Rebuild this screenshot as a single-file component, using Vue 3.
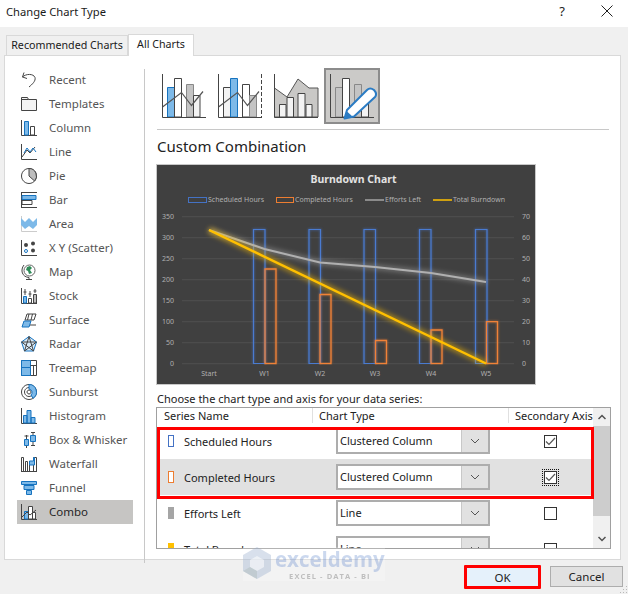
<script setup>
const D = '#444444', B = '#1673bf', L = '#7db9e8', G = '#bdbdbd', W = '#ffffff', P = '#f3f3f3'
const AX = ['M.5 0v15.5H16', 'none', D]
const sideItems = [
  { name: 'Recent', shapes: [['M3 .5 1.5 5 6 6.5M1.5 5C5 1.5 12.5 1.5 14 5.5 15 9 11 12.5 8 15', 'none', D]] },
  { name: 'Templates', shapes: [['M.5 14.5V1.5h6l1 2h8v11z', P, D], ['M.5 3.5h7', 'none', D]] },
  { name: 'Column', shapes: [AX, ['M3.5 15V1.5h4V15z', L, B], ['M9.5 15V6.5h4V15z', W, D]] },
  { name: 'Line', shapes: [AX, ['M1 13 6 6l3 3 5-6', 'none', D], ['M3 9l3-5 3 4 3-4 3 4', 'none', B]] },
  { name: 'Pie', shapes: [['M8 .5a7.5 7.5 0 1 0 .01 0z', W, D], ['M8 8V.5a7.5 7.5 0 0 1 5.6 12.5z', G, D]] },
  { name: 'Bar', shapes: [['M0 .5h16M0 15.5h16M.5 0v16', 'none', D], ['M1 3.5h14v4H1z', L, B], ['M1 8.5h10v4H1z', W, D]] },
  { name: 'Area', shapes: [['M.5 0v15.5H16', 'none', '#cccccc'], ['M0 2l4 4 4-4 4 4 4-4v7l-4 4-4-3-4 3-4-4z', L, 'none']] },
  { name: 'X Y (Scatter)', shapes: [AX, ['M3 5a2 2 0 1 0 4 0 2 2 0 1 0-4 0zM10 3.5a2 2 0 1 0 4 0 2 2 0 1 0-4 0zM10 10.5a2 2 0 1 0 4 0 2 2 0 1 0-4 0z', D, 'none'], ['M3.5 11a1.5 1.5 0 1 0 3 0 1.5 1.5 0 1 0-3 0z', W, B]] },
  { name: 'Map', shapes: [['M3 6.5a5.5 5.5 0 1 0 11 0 5.5 5.5 0 1 0-11 0z', W, '#666666'], ['M6 3l3-1 2 2-2 2 2 3-3 1-1-3-2-1z', '#2e8b57', 'none'], ['M3 1C-1 6 1 13 8 13.5M8 13.5v2M5 15.5h6', 'none', D]] },
  { name: 'Stock', shapes: [AX, ['M2.5 15V8.5h3V15z', L, B], ['M7.5 15v-4.500h3V15z', W, D], ['M12.5 15V6.500h3V15z', G, D], ['M4 1v6M9 3v6M14 1v4M2.500 4h3M7.500 6h3M12.500 3h3', 'none', D]] },
  { name: 'Surface', shapes: [['M4 8l2-6h9l-2 6zM8 2 6.500 8M11.500 2 10 8', 'none', D], ['M1 15l2-6h7l-2 6z', L, B], ['M9 13h6', 'none', D]] },
  { name: 'Radar', shapes: [['M8 .5 15.500 6l-3 9h-9L.5 6z', '#d9ecfb', B], ['M8 .5 12.500 15M8 .5 3.500 15M.5 6h15M.5 6l12 9M15.500 6l-12 9', 'none', D]] },
  { name: 'Treemap', shapes: [['M.5.5h15v15H.5z', W, D], ['M.5.5h9v7h-9zM.5 7.500h9v8h-9z', L, B], ['M9.500 5.500h6M12.500 5.500v10', 'none', D]] },
  { name: 'Sunburst', shapes: [['M8 .5a7.5 7.5 0 1 0 .01 0zM8 3.500a4.500 4.500 0 1 0 .01 0zM8 6a2 2 0 1 0 .01 0z', 'none', D], ['M8 .5a7.500 7.500 0 0 1 4 13.800L10 11a3.500 3.500 0 0 0-2-6z', L, B]] },
  { name: 'Histogram', shapes: [AX, ['M2.500 15V7.500h3.500V15zM6 15V2.500h4V15zM10 15V9.500h4V15z', L, B]] },
  { name: 'Box & Whisker', shapes: [['M3.500 7.500h4v6h-4zM9.500 3.500h5v6h-5z', L, B], ['M5.500 3v4M5.500 14v2M12 0v3M12 10v4M3.500 4h4M10 .5h4M10 13.500h4', 'none', D]] },
  { name: 'Waterfall', shapes: [['M.5 16V1.500h2V16M4.500 16V5.500h2V16M8.500 16V5M12.500 16V1.500h3V16M0 15.500h16', 'none', D], ['M8.500 5h4V1.500h1V9h-5z', L, B]] },
  { name: 'Funnel', shapes: [['M.5 1.500h15v3H.5zM3 5.500h10v4H3zM5.500 10.500h5v4h-5z', L, B]] },
  { name: 'Combo', shapes: [AX, ['M3.500 15V7.500h4V15z', L, B], ['M7.500 15V2.500h4V15z', W, D], ['M11.500 15V8.500h3V15z', W, D], ['M1 13 6 8l3 3 6-5', 'none', D]] }
]
const series = [
  { name: 'Scheduled Hours', type: 'Clustered Column', swatch: 'outline-blue', checked: true },
  { name: 'Completed Hours', type: 'Clustered Column', swatch: 'outline-orange', checked: true, active: true },
  { name: 'Efforts Left', type: 'Line', swatch: 'solid-gray', checked: false },
  { name: 'Total Burndown', type: 'Line', swatch: 'solid-yellow', checked: false }
]
const leftAxis = [350, 300, 250, 200, 150, 100, 50, 0]
const rightAxis = [70, 60, 50, 40, 30, 20, 10, 0]
const gridY = y => 216.7 + 21 * y
const xLabels = [['Start', 209], ['W1', 264.5], ['W2', 320], ['W3', 375], ['W4', 431], ['W5', 486]]
const blueBars = [253.5, 309, 364, 419.5, 475.5]
const orangeBars = [[265, 269], [320, 294.5], [375.5, 340.5], [431, 330], [486.5, 321.7]]
const grayLine = '209,230 264.500,249 320,262.500 375,267 431,273 486,282'
</script>

<template>
  <div class="dialog">
    <header class="titlebar">
      <span class="title">Change Chart Type</span>
      <span class="help">?</span>
      <svg class="close" width="12" height="12" viewBox="0 0 12 12"><path d="M.5.5l11 11M11.500.5l-11 11" stroke="#222" fill="none" /></svg>
    </header>

    <nav class="tabs">
      <div class="tab">Recommended Charts</div>
      <div class="tab current">All Charts</div>
    </nav>

    <section class="panel">
      <aside class="side">
        <div v-for="item in sideItems" :key="item.name" class="side-item" :class="{ selected: item.name === 'Combo' }">
          <svg class="side-icon" width="16" height="16" viewBox="0 0 16 16">
            <path v-for="(s, i) in item.shapes" :key="i" :d="s[0]" :fill="s[1]" :stroke="s[2]" />
          </svg>
          <span class="side-label">{{ item.name }}</span>
        </div>
      </aside>

      <main class="main">
        <div class="subtypes">
          <svg width="56" height="56" viewBox="156 68 56 56">
            <path d="M167.500 117V87.500h7V117z" fill="#7db9e8" stroke="#1673bf" />
            <path d="M174.500 117V78.500h7V117z" fill="#fff" stroke="#444" />
            <path d="M186.500 117V84.500h7V117z" fill="#c4c4c4" stroke="#888" />
            <path d="M193.500 117V95.500h6.500V117z" fill="#f3f3f3" stroke="#444" />
            <path d="M162.500 107 181.500 92.500 191.500 105.500 203 91.500" fill="none" stroke="#555" stroke-width="1.200" />
            <path d="M162.500 74V117.500H206" fill="none" stroke="#444" />
          </svg>
          <svg width="56" height="56" viewBox="212 68 56 56">
            <path d="M223.500 117V87.500h7V117z" fill="#f3f3f3" stroke="#444" />
            <path d="M230.500 117V78.500h7V117z" fill="#7db9e8" stroke="#1673bf" />
            <path d="M242.500 117V84.500h7V117z" fill="#fff" stroke="#444" />
            <path d="M249.500 117V95.500h7V117z" fill="#c4c4c4" stroke="#888" />
            <path d="M218.500 107 237.500 92.500 247.500 105.500 259 91.500" fill="none" stroke="#555" stroke-width="1.200" />
            <path d="M218.500 74V117.500H262" fill="none" stroke="#444" />
            <path d="M261.500 74V117" fill="none" stroke="#444" stroke-dasharray="4 2" />
          </svg>
          <svg width="56" height="56" viewBox="268 68 56 56">
            <path d="M274.500 88 287 97 298 79 309 88H318V117H274.500z" fill="#c9c8c6" stroke="#555" />
            <path d="M279.500 117V104.500h6.500V117zM287 117V97.500h6.500V117zM298 117V93.500h7V117zM306 117V104.500h6V117z" fill="#f3f3f3" stroke="#444" />
            <path d="M274.500 74V117.500H318" fill="none" stroke="#444" />
          </svg>
          <svg class="picked" width="56" height="56" viewBox="324 68 56 56">
            <path d="M335.500 117V87.500h7V117z" fill="#c4c4c4" stroke="#888" />
            <path d="M342.500 117V78.500h7V117z" fill="#fff" stroke="#444" />
            <path d="M354.500 117V84.500h7V117z" fill="#c4c4c4" stroke="#888" />
            <path d="M361.500 117V95.500h7V117z" fill="#f3f3f3" stroke="#444" />
            <path d="M330.500 74V117.500H374" fill="none" stroke="#444" />
            <path d="M344.500 118.500 347 110 367 90Q370 87 374 90 377.500 94 375 97L354 116.500z" fill="#fff" stroke="#2b7cc4" stroke-width="2" stroke-linejoin="round" />
            <path d="M344.500 118.500 346.500 111 352.500 116.500z" fill="#2b7cc4" />
          </svg>
        </div>
        <div class="rule"></div>
        <h2 class="heading">Custom Combination</h2>

        <svg class="chart" width="380" height="221" viewBox="156 164 380 221" font-family="'Noto Sans', sans-serif">
          <defs>
            <filter id="soft" x="-20%" y="-20%" width="140%" height="140%"><feGaussianBlur stdDeviation="2.500" /></filter>
            <filter id="barsoft" x="-50%" y="-10%" width="200%" height="120%"><feGaussianBlur stdDeviation="1.200" /></filter>
          </defs>
          <rect x="156.500" y="164.500" width="379" height="220" fill="#404040" stroke="#c8c8c8" />
          <text x="353.500" y="183" text-anchor="middle" fill="#e3e3e3" font-size="10.500" font-weight="700">Burndown Chart</text>

          <rect x="188.500" y="197.500" width="18" height="5" fill="none" stroke="#4472c4" />
          <text x="208" y="202" fill="#b0b0b0" font-size="7">Scheduled Hours</text>
          <rect x="276.500" y="197.500" width="17" height="5" fill="none" stroke="#ed7d31" />
          <text x="295" y="202" fill="#b0b0b0" font-size="7">Completed Hours</text>
          <path d="M365 200H384" stroke="#a5a5a5" stroke-width="1.500" />
          <text x="385" y="202" fill="#b0b0b0" font-size="7">Efforts Left</text>
          <path d="M433 200H452" stroke="#ffc000" stroke-width="1.500" />
          <text x="453" y="202" fill="#b0b0b0" font-size="7">Total Burndown</text>

          <path v-for="(v, i) in leftAxis" :key="v" :d="`M182 ${gridY(i)}H514`" stroke="#4f4f4f" stroke-width="1" />
          <text v-for="(v, i) in leftAxis" :key="'l' + v" x="174" :y="gridY(i) + 2.500" text-anchor="end" fill="#b0b0b0" font-size="7">{{ v }}</text>
          <text v-for="(v, i) in rightAxis" :key="'r' + v" x="522" :y="gridY(i) + 2.500" fill="#b0b0b0" font-size="7">{{ v }}</text>
          <text v-for="l in xLabels" :key="l[0]" :x="l[1]" y="376" text-anchor="middle" fill="#b0b0b0" font-size="7">{{ l[0] }}</text>

          <path v-for="x in blueBars" :key="'bg' + x" :d="`M${x} 363.500V229.500h11.500V363.500`" fill="none" stroke="#4472c4" stroke-width="2" opacity=".5" filter="url(#barsoft)" />
          <path v-for="b in orangeBars" :key="'og' + b[0]" :d="`M${b[0]} 363.500V${b[1]}h11V363.500`" fill="none" stroke="#ed7d31" stroke-width="2" opacity=".5" filter="url(#barsoft)" />
          <path v-for="x in blueBars" :key="'b' + x" :d="`M${x} 363.500V229.500h11.500V363.500z`" fill="none" stroke="#4a7bd0" stroke-width="1.200" />
          <path v-for="b in orangeBars" :key="'o' + b[0]" :d="`M${b[0]} 363.500V${b[1]}h11V363.500z`" fill="none" stroke="#f08238" stroke-width="1.300" />

          <polyline :points="grayLine" fill="none" stroke="#a5a5a5" stroke-width="5" opacity=".5" filter="url(#soft)" />
          <polyline :points="grayLine" fill="none" stroke="#b0b0b0" stroke-width="2" />
          <path d="M209 230 486 363.500" stroke="#ffc000" stroke-width="6" opacity=".5" filter="url(#soft)" />
          <path d="M209 230 486 363.500" stroke="#ffc000" stroke-width="2.400" />
        </svg>

        <p class="prompt">Choose the chart type and axis for your data series:</p>

        <div class="table">
          <div class="table-body">
            <div class="head">
              <span class="col-name">Series Name</span>
              <span class="col-type">Chart Type</span>
              <span class="col-axis">Secondary Axis</span>
            </div>
            <div v-for="s in series" :key="s.name" class="row" :class="{ active: s.active }">
              <span class="cell-name"><i class="swatch" :class="s.swatch"></i>{{ s.name }}</span>
              <span class="cell-type">
                <span class="select">
                  <span class="select-text">{{ s.type }}</span>
                  <span class="select-btn">
                    <svg width="10" height="6" viewBox="0 0 10 6"><path d="M1 1l4 4 4-4" fill="none" stroke="#555" /></svg>
                  </span>
                </span>
              </span>
              <span class="cell-axis">
                <span class="focus" :class="{ dotted: s.active }">
                  <span class="check">
                    <svg v-if="s.checked" width="11" height="9" viewBox="0 0 11 9"><path d="M1 4.500 4 7.500 10 1" fill="none" stroke="#555" stroke-width="1.200" /></svg>
                  </span>
                </span>
              </span>
            </div>
          </div>
          <div class="scrollbar">
            <svg class="arrow" width="8" height="6" viewBox="0 0 8 6"><path d="M.5 5 4 1.500 7.500 5" fill="none" stroke="#505050" stroke-width="1.500" /></svg>
            <div class="track"><div class="thumb"></div></div>
            <svg class="arrow" width="8" height="6" viewBox="0 0 8 6"><path d="M.5 1 4 4.500 7.500 1" fill="none" stroke="#505050" stroke-width="1.500" /></svg>
          </div>
          <div class="red-box"></div>
        </div>
      </main>
    </section>

    <footer class="footer">
      <button class="btn ok">OK</button>
      <button class="btn cancel">Cancel</button>
    </footer>

    <div class="watermark">
      <svg width="28" height="32" viewBox="0 0 28 32">
        <path d="M14 0 28 8V24L14 32 0 24V8z" fill="#8fa6c9" opacity=".35" />
        <path d="M14 9 21 13V20L14 24 7 20V13z" fill="#fff" opacity=".55" />
        <path d="M7 20 14 24V32L0 24z" fill="#a9b9b5" opacity=".4" />
      </svg>
      <div class="wm-text">
        <span class="wm-big">exceldemy</span>
        <span class="wm-small">EXCEL - DATA - BI</span>
      </div>
    </div>

    <svg class="grip" width="10" height="10" viewBox="0 0 10 10">
      <path d="M8 2h1v1H8zM5 5h1v1H5zM8 5h1v1H8zM2 8h1v1H2zM5 8h1v1H5zM8 8h1v1H8z" fill="#b8b8b8" />
    </svg>
  </div>
</template>

<style scoped>
.dialog {
  position: relative;
  width: 628px;
  height: 594px;
  overflow: hidden;
  display: flex;
  flex-direction: column;
  background: #f0f0f0;
  color: #222;
  font-family: "Noto Sans", "Open Sans", sans-serif;
  font-size: 11.5px;
}
.titlebar {
  height: 27px;
  flex: none;
  box-sizing: border-box;
  display: flex;
  align-items: center;
  background: #fff;
  padding: 0 15px 5px 6px;
}
.title { flex: 1; font-size: 11.2px; color: #1a1a1a; }
.help { margin-right: 36px; font-size: 13px; color: #222; }
.tabs {
  height: 28px;
  flex: none;
  display: flex;
  align-items: flex-end;
  padding-left: 6px;
}
.tab {
  width: 122px;
  height: 20px;
  border: 1px solid #d9d9d9;
  border-bottom: 0;
  box-sizing: border-box;
  background: #f0f0f0;
  text-align: center;
  line-height: 19px;
  font-size: 10.7px;
  white-space: nowrap;
  color: #1a1a1a;
}
.tab.current {
  width: 66px;
  height: 22px;
  background: #fff;
  line-height: 19px;
  margin-bottom: -1px;
  position: relative;
  z-index: 1;
}
.panel {
  height: 505px;
  flex: none;
  width: 617px;
  margin-left: 4px;
  box-sizing: border-box;
  background: #fff;
  border: 1px solid #d9d9d9;
  display: flex;
}
.side {
  width: 140px;
  height: 494px;
  flex: none;
  box-sizing: border-box;
  margin-top: 13px;
  padding: 0 0 0 12px;
  border-right: 1px solid #c8c8c8;
}
.side-item {
  width: 116px;
  height: 24px;
  display: flex;
  align-items: center;
  gap: 12px;
  padding-left: 4px;
  box-sizing: border-box;
  color: #555;
  position: relative;
  top: -1px;
}
.side-icon { flex: none; }
.side-label { padding-bottom: 2px; }
.side-item.selected { background: #c6c5c3; color: #262626; }
.main {
  padding: 12px 0 0 11px;
  width: 466px;
  box-sizing: border-box;
}
.subtypes { display: flex; height: 56px; }
.subtypes svg { display: block; }
.picked { background: #cbcac8; outline: 2px solid #8c8c8c; outline-offset: -2px; }
.rule {
  height: 1px;
  margin: 5px 0 0 1px;
  width: 452px;
  background: #c8c8c8;
}
.heading {
  margin: 0 0 0 1px;
  height: 34px;
  padding-top: 5px;
  box-sizing: border-box;
  font-size: 15px;
  line-height: 22px;
  font-weight: 400;
  color: #222;
}
.chart { display: block; }
.prompt {
  margin: 0 0 0 1px;
  height: 22px;
  padding-top: 5px;
  box-sizing: border-box;
  line-height: 17px;
  color: #222;
  font-size: 11px;
}
.table {
  position: relative;
  width: 455px;
  height: 142px;
  box-sizing: border-box;
  border: 1px solid #a0a0a0;
  display: flex;
  overflow: hidden;
  font-size: 11px;
}
.table-body { width: 436px; flex: none; }
.head {
  height: 15px;
  display: grid;
  grid-template-columns: 155px 196px 85px;
  line-height: 15px;
  color: #222;
  white-space: nowrap;
}
.col-name { padding-left: 7px; }
.col-type, .col-axis { padding-left: 6px; border-left: 1px solid #e0e0e0; }
.row {
  height: 36px;
  display: grid;
  grid-template-columns: 155px 196px 85px;
  align-items: center;
}
.row.active { background: #e1e1e1; }
.cell-name { display: flex; align-items: center; padding-left: 11px; color: #222; }
.swatch {
  width: 6px;
  height: 12px;
  box-sizing: border-box;
  margin-right: 10px;
  flex: none;
}
.outline-blue { border: 1px solid #4472c4; background: #fff; }
.outline-orange { border: 1px solid #ed7d31; background: #fff; }
.solid-gray { background: #a5a5a5; }
.solid-yellow { background: #ffc000; }
.cell-type { padding-left: 24px; }
.select {
  display: flex;
  width: 154px;
  height: 26px;
  box-sizing: border-box;
  border: 2px solid #adadad;
  background: #fff;
}
.select-text { flex: 1; line-height: 21px; padding-left: 2px; color: #222; }
.select-btn {
  width: 26px;
  background: #e1e1e1;
  border-left: 1px solid #c8c8c8;
  display: flex;
  align-items: center;
  justify-content: center;
}
.cell-axis { display: flex; justify-content: center; }
.focus { display: flex; padding: 1px; border: 1px dotted transparent; }
.focus.dotted { border-color: #111; }
.check {
  width: 13px;
  height: 13px;
  box-sizing: border-box;
  border: 1px solid #333;
  background: #fff;
  display: flex;
  align-items: center;
  justify-content: center;
}
.scrollbar {
  width: 17px;
  flex: none;
  display: flex;
  flex-direction: column;
  align-items: center;
  background: #f0f0f0;
}
.arrow { flex: none; margin: 6px 0; }
.track { flex: 1; width: 100%; }
.thumb { height: 90px; background: #cdcdcd; }
.red-box {
  position: absolute;
  left: 0;
  top: 19px;
  width: 437px;
  height: 72px;
  box-sizing: border-box;
  border: 3px solid #f00;
}
.footer {
  flex: 1;
  display: flex;
  justify-content: flex-end;
  gap: 9px;
  padding: 5px 5px 0 0;
  box-sizing: border-box;
}
.btn {
  font: inherit;
  font-size: 11.5px;
  color: #222;
  padding: 0;
  box-sizing: border-box;
}
.ok {
  width: 77px;
  height: 24px;
  border: 3px solid #f00;
  border-radius: 1px;
  background: #e5f1fb;
}
.cancel {
  width: 73px;
  height: 21px;
  margin-top: 1px;
  border: 1px solid #adadad;
  background: #e1e1e1;
}
.watermark {
  position: absolute;
  left: 243px;
  top: 547px;
  display: flex;
  gap: 4px;
  pointer-events: none;
  background: rgba(255, 255, 255, .2);
}
.wm-text { display: flex; flex-direction: column; align-items: center; }
.wm-big {
  font-family: "Open Sans", sans-serif;
  font-weight: 700;
  font-size: 20.5px;
  line-height: 24px;
  color: #4472c4;
  opacity: .27;
}
.wm-small {
  font-family: "Open Sans", sans-serif;
  font-weight: 700;
  font-size: 7.5px;
  letter-spacing: 1.1px;
  line-height: 10px;
  color: #8a8a8a;
  opacity: .5;
}
.grip { position: absolute; right: 0; bottom: 0; }
</style>
